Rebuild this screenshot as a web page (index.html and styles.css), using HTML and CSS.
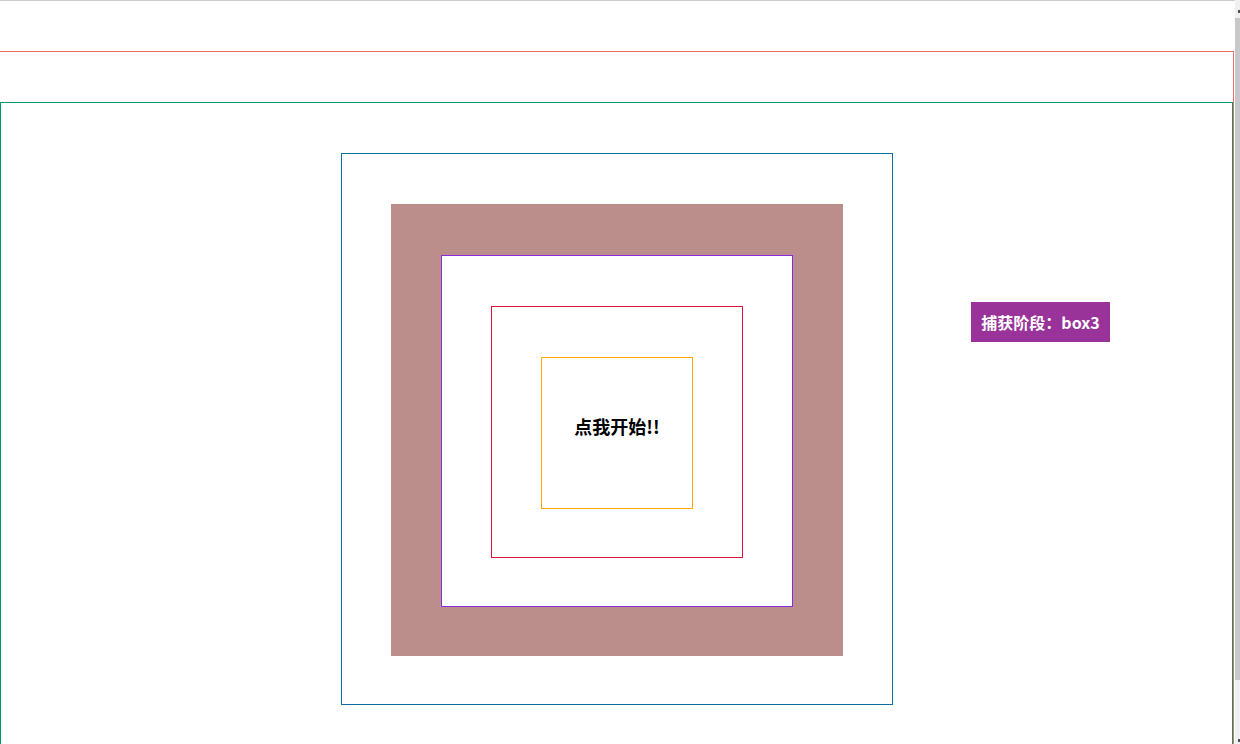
FILE: index.html
```html
<!DOCTYPE html>
<html lang="zh-CN">
<head>
<meta charset="utf-8">
<title>事件捕获</title>
<link rel="stylesheet" href="styles.css">
</head>
<body>
<div class="frame">
  <div class="outer">
    <div class="inner">
      <div class="box box1">
        <div class="box box2">
          <div class="box box3">
            <div class="box box4">
              <div class="box box5">
                <div class="start">点我开始!!</div>
              </div>
            </div>
          </div>
        </div>
      </div>
    </div>
  </div>
</div>
<div class="phase">捕获阶段：box3</div>
<div class="scrollbar">
  <span class="arrow arrow-up"></span>
  <span class="thumb"></span>
  <span class="arrow arrow-down"></span>
</div>
</body>
</html>
```
FILE: styles.css
```css
html, body {
  margin: 0;
  padding: 0;
  overflow: hidden;
  background: #fff;
  height: 744px;
  font-family: "Noto Sans CJK SC", "Noto Sans", sans-serif;
}

.frame {
  width: 1235px;
  border-top: 1px solid #cccccc;
  padding-top: 50px;
}

.outer {
  width: 1233px;
  margin-left: -1px;
  border: 1px solid #ee6e66;
  border-bottom: none;
  padding-top: 50px;
}

.inner {
  width: 1231px;
  height: 591px;
  border: 1px solid #00996b;
  border-bottom: none;
  padding-top: 50px;
}

.box {
  border: 1px solid;
  padding: 50px 49px 48px;
  background: #fff;
}

.box1 {
  width: 452px;
  margin-left: 340px;
  border-color: #0b6fa4;
}

.box2 {
  width: 352px;
  background: #bb8e8c;
  border-color: #bb8e8c;
}

.box3 {
  width: 252px;
  border-color: #8a2be2;
}

.box4 {
  width: 152px;
  border-color: #dc143c;
}

.box5 {
  width: 52px;
  height: 52px;
  border-color: #ffa500;
  display: flex;
  justify-content: center;
  align-items: center;
}

.start {
  white-space: nowrap;
  font-size: 18px;
  font-weight: 700;
  color: #000;
  line-height: 24px;
  margin-top: -17px;
}

.phase {
  position: absolute;
  left: 971px;
  top: 302px;
  width: 139px;
  height: 40px;
  line-height: 40px;
  background: #993399;
  color: #fff;
  font-size: 16px;
  font-weight: 700;
  text-align: center;
  white-space: nowrap;
}

.scrollbar {
  position: fixed;
  top: 0;
  left: 1235px;
  width: 5px;
  height: 744px;
  background: #f0f0f0;
}

.thumb {
  position: absolute;
  left: 0;
  top: 18px;
  width: 5px;
  height: 662px;
  background: #c8c8c8;
}

.arrow {
  position: absolute;
  left: 3px;
  width: 2px;
  height: 3px;
  background: #505050;
}

.arrow-up { top: 10px; }
.arrow-down { top: 739px; }
```
